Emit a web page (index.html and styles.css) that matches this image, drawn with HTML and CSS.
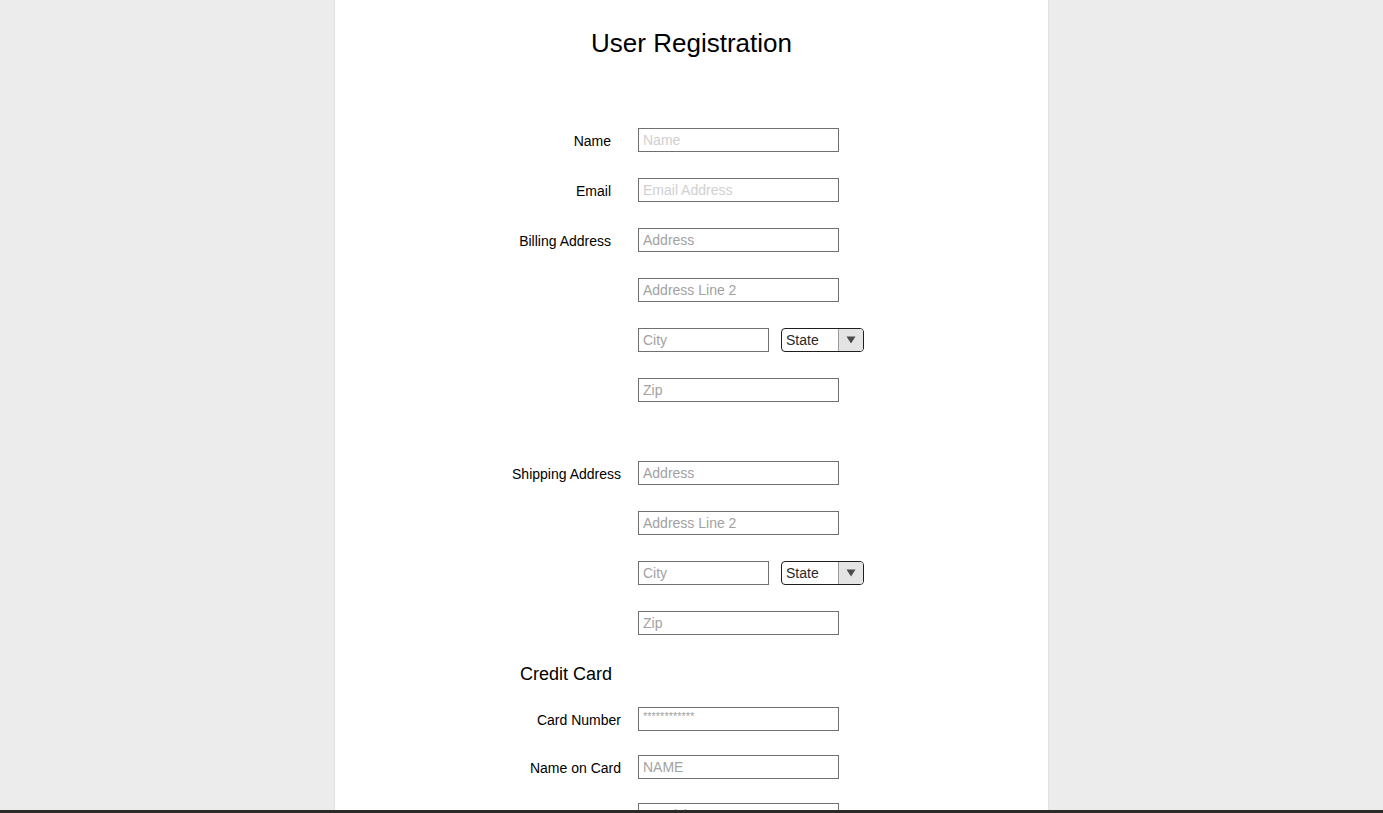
FILE: index.html
```html
<!DOCTYPE html>
<html lang="en">
<head>
<meta charset="utf-8">
<title>User Registration</title>
<link rel="stylesheet" href="styles.css">
</head>
<body>
<main class="card">
  <h1 class="title">User Registration</h1>

  <section class="group group-billing">
    <div class="row">
      <label class="label">Name</label>
      <input class="field light" type="text" placeholder="Name">
    </div>
    <div class="row">
      <label class="label">Email</label>
      <input class="field light" type="text" placeholder="Email Address">
    </div>
    <div class="row">
      <label class="label">Billing Address</label>
      <input class="field" type="text" placeholder="Address">
    </div>
    <div class="row">
      <span class="label"></span>
      <input class="field" type="text" placeholder="Address Line 2">
    </div>
    <div class="row">
      <span class="label"></span>
      <div class="city-state">
        <input class="field city" type="text" placeholder="City">
        <div class="select"><span class="select-text">State</span><span class="select-arrow"><svg width="10" height="8" viewBox="0 0 10 8"><path d="M0.5 0.5 H9.5 L5 7.5 Z" fill="#4a4a4a"/></svg></span></div>
      </div>
    </div>
    <div class="row">
      <span class="label"></span>
      <input class="field" type="text" placeholder="Zip">
    </div>
  </section>

  <section class="group group-shipping">
    <div class="row">
      <label class="label">Shipping Address</label>
      <input class="field" type="text" placeholder="Address">
    </div>
    <div class="row">
      <span class="label"></span>
      <input class="field" type="text" placeholder="Address Line 2">
    </div>
    <div class="row">
      <span class="label"></span>
      <div class="city-state">
        <input class="field city" type="text" placeholder="City">
        <div class="select"><span class="select-text">State</span><span class="select-arrow"><svg width="10" height="8" viewBox="0 0 10 8"><path d="M0.5 0.5 H9.5 L5 7.5 Z" fill="#4a4a4a"/></svg></span></div>
      </div>
    </div>
    <div class="row">
      <span class="label"></span>
      <input class="field" type="text" placeholder="Zip">
    </div>
  </section>

  <h2 class="subtitle">Credit Card</h2>

  <section class="group group-card">
    <div class="row">
      <label class="label">Card Number</label>
      <input class="field stars" type="text" placeholder="************">
    </div>
    <div class="row">
      <label class="label">Name on Card</label>
      <input class="field" type="text" placeholder="NAME">
    </div>
    <div class="row">
      <label class="label">Expiration Date</label>
      <input class="field" type="text" placeholder="Month/Year">
    </div>
  </section>
</main>
<div class="desktop-strip"></div>
</body>
</html>
```
FILE: styles.css
```css
html, body {
  margin: 0;
  padding: 0;
  height: 813px;
  overflow: hidden;
}
body {
  background: #ececec;
  font-family: "Liberation Sans", Arial, sans-serif;
  color: #000;
}
.card {
  width: 713px;
  margin: 0 auto;
  min-height: 900px;
  background: #fff;
  box-shadow: 0 0 0 1px #e2e2e2;
  padding-top: 28px;
  box-sizing: border-box;
}
.title {
  margin: 0;
  font-size: 26px;
  line-height: 30px;
  font-weight: normal;
  text-align: center;
}
.group-billing {
  margin-top: 70px;
}
.group-shipping {
  margin-top: 59px;
}
.row {
  display: flex;
  align-items: center;
  height: 24px;
  margin-bottom: 26px;
}
.group-card .row {
  margin-bottom: 24px;
}
.label {
  width: 276px;
  padding-right: 27px;
  padding-top: 2px;
  text-align: right;
  font-size: 14px;
  line-height: 16px;
  flex: none;
  box-sizing: content-box;
}
.group-shipping .label,
.group-card .label {
  width: 286px;
  padding-right: 17px;
}
.field {
  width: 201px;
  height: 24px;
  box-sizing: border-box;
  border: 1px solid #707070;
  border-radius: 0;
  padding: 0 4px;
  margin: 0;
  font-family: "Liberation Sans", Arial, sans-serif;
  font-size: 14px;
  background: #fff;
  outline: none;
}
.field::placeholder {
  color: #a2a2a2;
}
.field.light::placeholder {
  color: #d0d0d0;
}
.field.stars {
  font-size: 11px;
  padding-bottom: 6px;
}
.city-state {
  display: flex;
  align-items: center;
  gap: 12px;
}
.field.city {
  width: 131px;
}
.select {
  display: flex;
  width: 83px;
  height: 24px;
  box-sizing: border-box;
  border: 1px solid #1e1e1e;
  border-radius: 4px;
  overflow: hidden;
  font-size: 14px;
}
.select-text {
  flex: 1;
  padding-left: 4px;
  line-height: 22px;
  color: #2a2a2a;
}
.select-arrow {
  width: 24px;
  background: #e4e4e4;
  border-left: 1px solid #9a9a9a;
  display: flex;
  align-items: center;
  justify-content: center;
}
.subtitle {
  margin: 28px 0 22px 185px;
  font-size: 18px;
  line-height: 22px;
  font-weight: normal;
}
.desktop-strip {
  position: fixed;
  left: 0;
  right: 0;
  bottom: 0;
  height: 3px;
  background: #2b2b2a;
}
```
